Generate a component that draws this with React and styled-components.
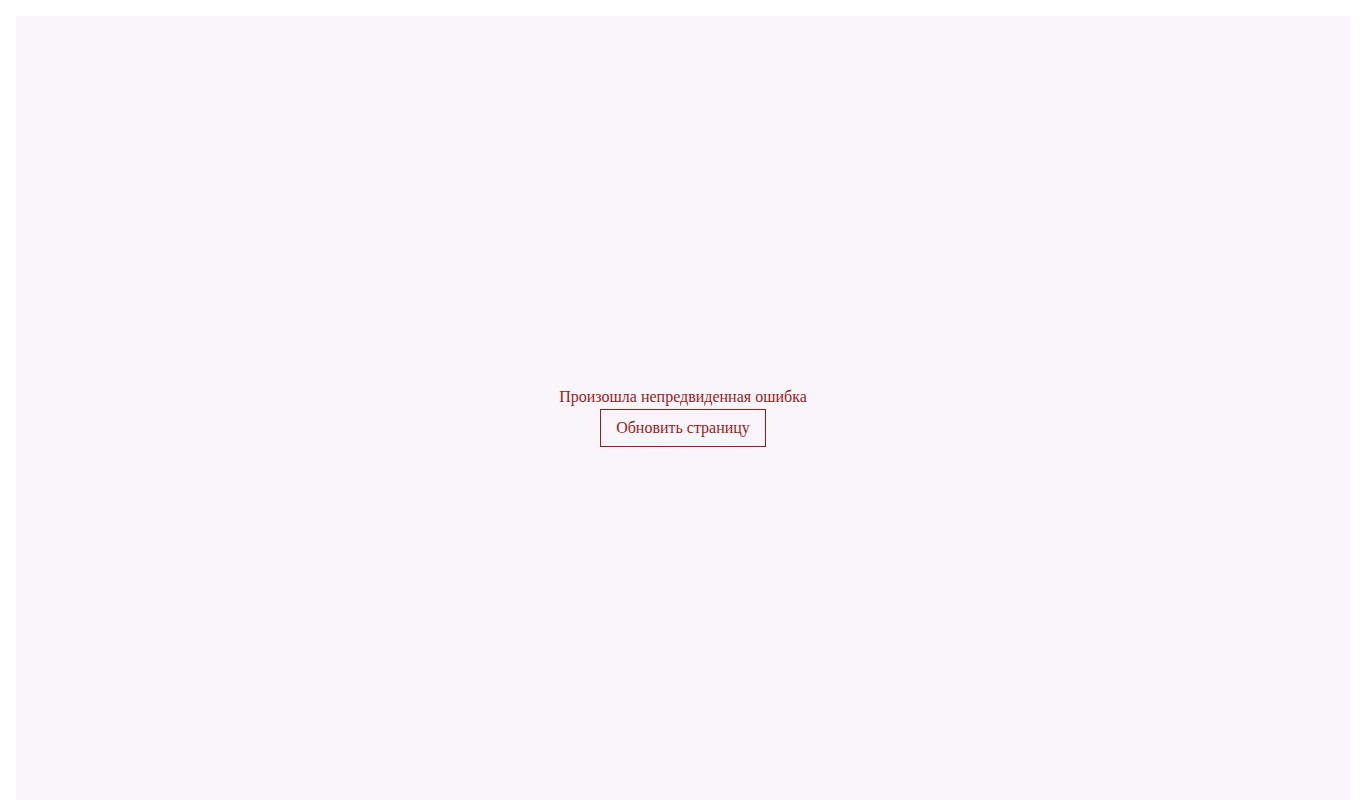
import styled, { createGlobalStyle } from "styled-components";

const GlobalStyle = createGlobalStyle`
  body {
    margin: 0;
    background: #fff;
    font-family: "Liberation Serif", "Times New Roman", serif;
  }
`;

const Page = styled.div`
  padding: 16px;
`;

const ErrorBox = styled.div`
  min-height: 100vh;
  box-sizing: border-box;
  padding-top: 2px;
  background-color: #faf5fa;
  display: flex;
  flex-direction: column;
  align-items: center;
  justify-content: center;
  gap: 3px;
  color: #9b1c1c;
`;

const Message = styled.p`
  margin: 0;
  font-size: 16px;
`;

const ReloadButton = styled.button`
  font-family: inherit;
  font-size: 16px;
  color: #9b1c1c;
  background: transparent;
  border: 1px solid #9b1c1c;
  padding: 9px 15px;
  cursor: pointer;
`;

const App = () => {
  return (
    <Page>
      <GlobalStyle />
      <ErrorBox>
        <Message>Произошла непредвиденная ошибка</Message>
        <ReloadButton onClick={() => window.location.reload()}>
          Обновить страницу
        </ReloadButton>
      </ErrorBox>
    </Page>
  );
};

export default App;
